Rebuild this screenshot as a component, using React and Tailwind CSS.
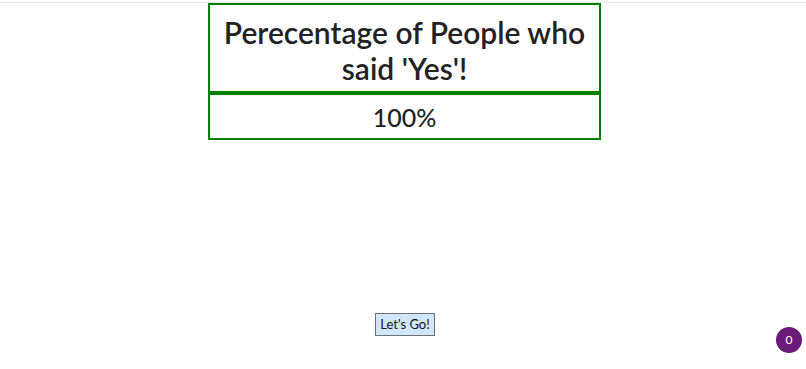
import React from 'react';

function ResultCard() {
  return (
    <div className="ml-[208px] w-[393px] text-[#222]">
      <div className="border-2 border-[#008000] pt-[9px] pb-[5px] text-center">
        <h1 className="text-[30px] leading-[36px] font-semibold">Perecentage of People who said 'Yes'!</h1>
      </div>
      <div className="border-2 border-t-4 border-[#008000] -mt-[2px] h-[49px] flex items-center justify-center">
        <p className="text-[25px] leading-[30px] font-medium">100%</p>
      </div>
    </div>
  );
}

export default function App() {
  return (
    <div className="relative h-[369px] bg-white" style={{ fontFamily: 'Lato, "Open Sans", sans-serif' }}>
      <div className="h-[2px]" />
      <div className="border-t border-gray-200">
        <ResultCard />
        <div className="mt-[173px] flex justify-center">
          <button className="ml-[4px] h-[23px] px-[4px] bg-[#cfe6fb] border border-[#707070] text-[13px] leading-[19px] text-[#111]">
            Let's Go!
          </button>
        </div>
      </div>

      {/* counter badge */}
      <div className="absolute right-[4px] bottom-[16px] w-[26px] h-[26px] rounded-full bg-[#6a1b7a] text-white text-[12px] flex items-center justify-center">
        0
      </div>
    </div>
  );
}
